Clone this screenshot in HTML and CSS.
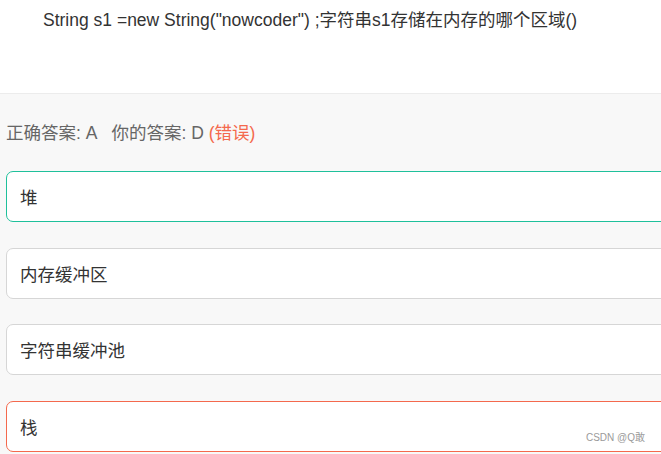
FILE: index.html
```html
<!DOCTYPE html>
<html lang="zh">
<head>
<meta charset="utf-8">
<link rel="stylesheet" href="styles.css">
</head>
<body>
<div class="header">
  <p class="question">String s1 =new String("nowcoder") ;字符串s1存储在内存的哪个区域()</p>
</div>
<div class="main">
  <p class="answer">正确答案: A<span class="sep"></span>你的答案: D <span class="wrong">(错误)</span></p>
  <div class="options">
    <div class="option correct">堆</div>
    <div class="option">内存缓冲区</div>
    <div class="option">字符串缓冲池</div>
    <div class="option chosen">栈</div>
  </div>
  <div class="mark">CSDN @Q敢</div>
</div>
</body>
</html>
```
FILE: styles.css
```css
html, body {
  margin: 0;
  padding: 0;
  overflow: hidden;
  height: 454px;
  background: #f8f8f8;
  font-family: "Liberation Sans", "Noto Sans CJK SC", sans-serif;
}
.header {
  background: #fff;
  height: 94px;
  border-bottom: 1px solid #ececec;
  box-sizing: border-box;
  padding: 9px 0 0 43px;
}
.question {
  margin: 0;
  font-size: 17.5px;
  line-height: 22px;
  color: #333;
  white-space: nowrap;
}
.main {
  position: relative;
  padding: 0 0 0 6px;
  height: 360px;
}
.answer {
  margin: 0;
  padding-top: 28px;
  font-size: 17.5px;
  line-height: 22px;
  color: #666;
  white-space: nowrap;
}
.sep {
  display: inline-block;
  width: 14px;
}
.wrong {
  color: #f4694d;
}
.options {
  display: flex;
  flex-direction: column;
  gap: 25.67px;
  margin-top: 27px;
  width: 700px;
}
.option {
  height: 51px;
  box-sizing: border-box;
  border: 1px solid #d6d6d6;
  border-radius: 7px;
  background: #fff;
  display: flex;
  align-items: center;
  padding-left: 13px;
  font-size: 17.5px;
  color: #333;
}
.option.correct {
  border-color: #1fc09b;
}
.option.chosen {
  border-color: #f4694d;
}
.mark {
  position: absolute;
  right: 16px;
  bottom: 10px;
  font-size: 10px;
  color: #9a9a9a;
}
```
